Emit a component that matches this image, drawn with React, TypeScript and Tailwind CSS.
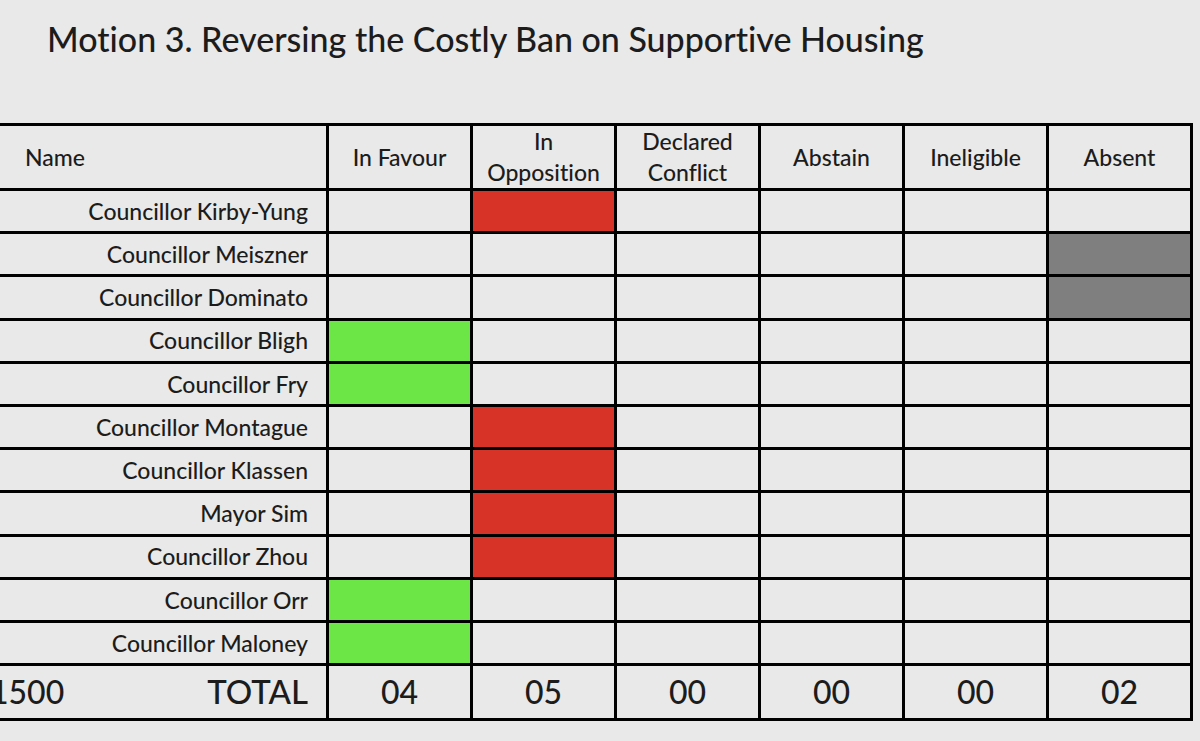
const cols = ["In Favour", "In Opposition", "Declared Conflict", "Abstain", "Ineligible", "Absent"];

type Vote = "favour" | "oppose" | "absent";

const rows: { name: string; vote: Vote }[] = [
  { name: "Councillor Kirby-Yung", vote: "oppose" },
  { name: "Councillor Meiszner", vote: "absent" },
  { name: "Councillor Dominato", vote: "absent" },
  { name: "Councillor Bligh", vote: "favour" },
  { name: "Councillor Fry", vote: "favour" },
  { name: "Councillor Montague", vote: "oppose" },
  { name: "Councillor Klassen", vote: "oppose" },
  { name: "Mayor Sim", vote: "oppose" },
  { name: "Councillor Zhou", vote: "oppose" },
  { name: "Councillor Orr", vote: "favour" },
  { name: "Councillor Maloney", vote: "favour" },
];

const voteCol: Record<Vote, number> = { favour: 0, oppose: 1, absent: 5 };
const voteBg: Record<Vote, string> = {
  favour: "bg-[#6be646]",
  oppose: "bg-[#d83327]",
  absent: "bg-[#7f7f7f]",
};

const totals = ["04", "05", "00", "00", "00", "02"];

export default function App() {
  return (
    <div
      className="w-[1200px] h-[741px] overflow-hidden bg-[#e9e9e9] text-[#1c1c1c] [font-variant-ligatures:none]"
      style={{ fontFamily: "Lato, 'Noto Sans', sans-serif" }}
    >
      <h1 className="pl-[47px] pt-[17px] text-[34px] leading-[44px] font-medium">
        Motion 3. Reversing the Costly Ban on Supportive Housing
      </h1>

      <table className="ml-[-40px] mt-[62px] table-fixed border-collapse font-medium">
        <colgroup>
          <col className="w-[366px]" />
          {cols.map((c) => (
            <col key={c} className="w-[144px]" />
          ))}
        </colgroup>
        <thead>
          <tr className="h-[63px]">
            <th className="border-[3px] border-black pl-[62px] text-left text-[23px] font-medium">Name</th>
            {cols.map((c) => (
              <th key={c} className="border-[3px] border-black px-1 text-[23px] font-medium leading-[31px]">
                {c === "In Opposition" ? (
                  <>In<br />Opposition</>
                ) : c === "Declared Conflict" ? (
                  <>Declared<br />Conflict</>
                ) : (
                  c
                )}
              </th>
            ))}
          </tr>
        </thead>
        <tbody>
          {rows.map((r) => (
            <tr key={r.name} className="h-[43.2px]">
              <td className="border-[3px] border-black pr-[18px] text-right text-[23px]">{r.name}</td>
              {cols.map((c, i) => (
                <td
                  key={c}
                  className={`border-[3px] border-black ${voteCol[r.vote] === i ? voteBg[r.vote] : ""}`}
                />
              ))}
            </tr>
          ))}
          <tr className="h-[55px]">
            <td className="border-[3px] border-black text-[32px]">
              <div className="flex items-center justify-between pl-[27px] pr-[18px]">
                <span>1500</span>
                <span className="text-[33px]">TOTAL</span>
              </div>
            </td>
            {totals.map((t, i) => (
              <td key={i} className="border-[3px] border-black text-center text-[32px]">
                {t}
              </td>
            ))}
          </tr>
        </tbody>
      </table>
    </div>
  );
}
